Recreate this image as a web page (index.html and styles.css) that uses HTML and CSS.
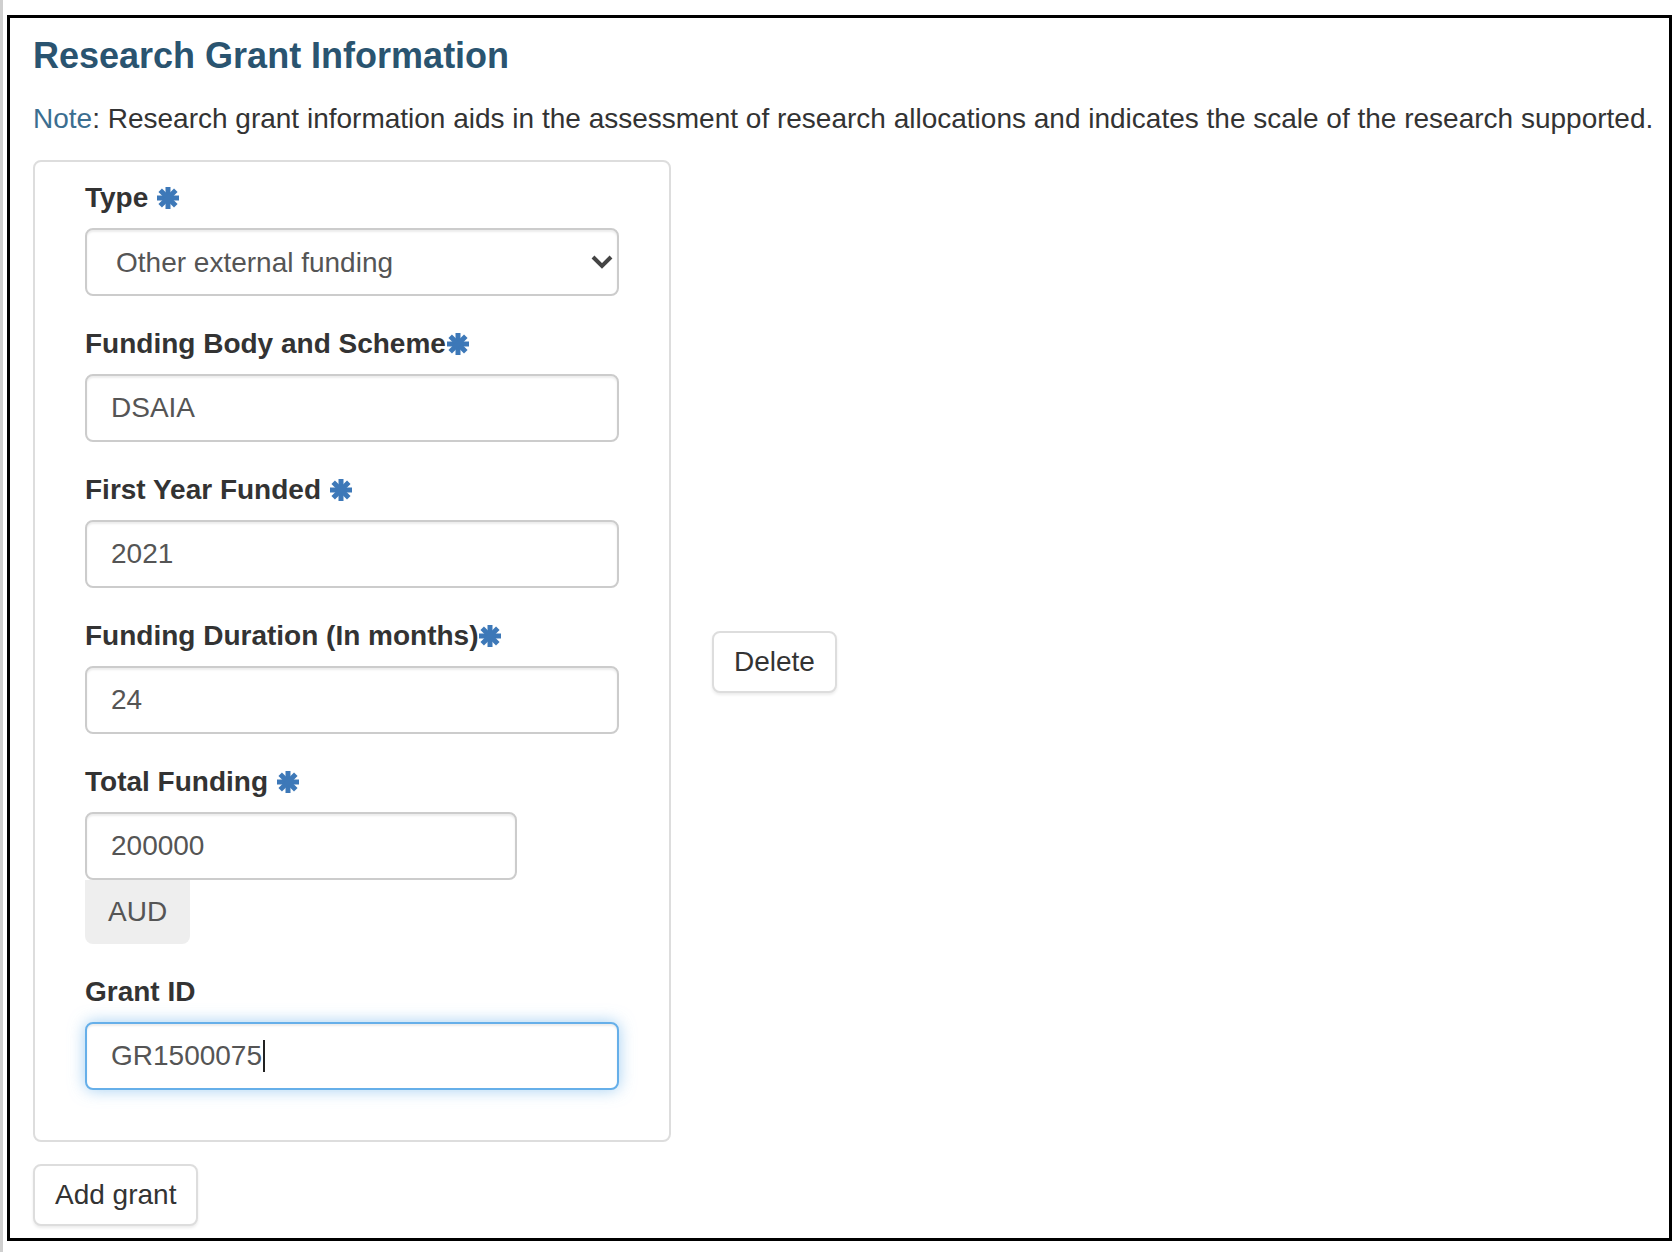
FILE: index.html
```html
<!DOCTYPE html>
<html lang="en">
<head>
<meta charset="utf-8">
<title>Research Grant Information</title>
<link rel="stylesheet" href="styles.css">
</head>
<body>
<div class="frame">
  <h4 class="title">Research Grant Information</h4>
  <p class="note"><span class="note-label">Note</span>: Research grant information aids in the assessment of research allocations and indicates the scale of the research supported.</p>

  <div class="grant-row">
    <div class="panel">
      <div class="form-group">
        <label class="label">Type <svg class="req" viewBox="0 0 24 24"><g stroke="#3d78b8" stroke-width="5"><line x1="12" y1="1" x2="12" y2="23"/><line x1="1" y1="12" x2="23" y2="12"/><line x1="4.2" y1="4.2" x2="19.8" y2="19.8"/><line x1="19.8" y1="4.2" x2="4.2" y2="19.8"/></g></svg></label>
        <div class="select-wrap">
          <select class="form-control select">
            <option>Other external funding</option>
          </select>
          <svg class="chevron" viewBox="0 0 22 14"><polyline points="2,2 11,11 20,2" fill="none" stroke="#444" stroke-width="4"/></svg>
        </div>
      </div>

      <div class="form-group">
        <label class="label">Funding Body and Scheme<svg class="req" viewBox="0 0 24 24"><g stroke="#3d78b8" stroke-width="5"><line x1="12" y1="1" x2="12" y2="23"/><line x1="1" y1="12" x2="23" y2="12"/><line x1="4.2" y1="4.2" x2="19.8" y2="19.8"/><line x1="19.8" y1="4.2" x2="4.2" y2="19.8"/></g></svg></label>
        <input class="form-control" type="text" value="DSAIA">
      </div>

      <div class="form-group">
        <label class="label">First Year Funded <svg class="req" viewBox="0 0 24 24"><g stroke="#3d78b8" stroke-width="5"><line x1="12" y1="1" x2="12" y2="23"/><line x1="1" y1="12" x2="23" y2="12"/><line x1="4.2" y1="4.2" x2="19.8" y2="19.8"/><line x1="19.8" y1="4.2" x2="4.2" y2="19.8"/></g></svg></label>
        <input class="form-control" type="text" value="2021">
      </div>

      <div class="form-group">
        <label class="label">Funding Duration (In months)<svg class="req" viewBox="0 0 24 24"><g stroke="#3d78b8" stroke-width="5"><line x1="12" y1="1" x2="12" y2="23"/><line x1="1" y1="12" x2="23" y2="12"/><line x1="4.2" y1="4.2" x2="19.8" y2="19.8"/><line x1="19.8" y1="4.2" x2="4.2" y2="19.8"/></g></svg></label>
        <input class="form-control" type="text" value="24">
      </div>

      <div class="form-group">
        <label class="label">Total Funding <svg class="req" viewBox="0 0 24 24"><g stroke="#3d78b8" stroke-width="5"><line x1="12" y1="1" x2="12" y2="23"/><line x1="1" y1="12" x2="23" y2="12"/><line x1="4.2" y1="4.2" x2="19.8" y2="19.8"/><line x1="19.8" y1="4.2" x2="4.2" y2="19.8"/></g></svg></label>
        <input class="form-control amount" type="text" value="200000">
        <div class="addon">AUD</div>
      </div>

      <div class="form-group">
        <label class="label">Grant ID</label>
        <div class="form-control focused">GR1500075<span class="caret"></span></div>
      </div>
    </div>

    <button class="btn delete" type="button">Delete</button>
  </div>

  <button class="btn add" type="button">Add grant</button>
</div>
</body>
</html>
```

FILE: styles.css
```css
* { box-sizing: border-box; }

html { background: #fff; }

body {
  margin: 0;
  min-height: 1252px;
  padding: 15px 0 0 4px;
  border-left: 3px solid #cfcfcf;
  font-family: "Liberation Sans", Arial, Helvetica, sans-serif;
  font-size: 28px;
  line-height: 40px;
  color: #333;
}

.frame {
  width: 1665px;
  height: 1226px;
  border: 3px solid #000;
  padding: 18px 0 0 23px;
}

.title {
  margin: 0 0 23px;
  font-size: 36px;
  line-height: 40px;
  font-weight: bold;
  color: #2a5470;
}

.note {
  margin: 0 0 21px;
  white-space: nowrap;
}

.note-label { color: #3b6e90; }

.grant-row {
  display: flex;
  align-items: center;
}

.panel {
  width: 638px;
  margin-bottom: 22px;
  border: 2px solid #ddd;
  border-radius: 8px;
  padding: 16px 50px 22px;
}

.form-group { margin-bottom: 28px; }

.label {
  display: block;
  margin-bottom: 10px;
  font-weight: bold;
  line-height: 40px;
  color: #333;
  white-space: nowrap;
}

.req {
  width: 24px;
  height: 24px;
  vertical-align: -3px;
}

.form-control {
  display: block;
  width: 534px;
  height: 68px;
  margin: 0;
  padding: 0 24px;
  border: 2px solid #ccc;
  border-radius: 8px;
  background: #fff;
  font-family: inherit;
  font-size: 28px;
  color: #555;
  box-shadow: inset 0 2px 2px rgba(0, 0, 0, 0.075);
  outline: none;
}

.select-wrap { position: relative; width: 534px; }

.select {
  -webkit-appearance: none;
  appearance: none;
  padding-left: 29px;
}

.chevron {
  position: absolute;
  right: 6px;
  top: 27px;
  width: 22px;
  height: 14px;
  pointer-events: none;
}

.amount {
  width: 432px;
}

.addon {
  display: flex;
  align-items: center;
  width: 105px;
  height: 64px;
  padding: 0 23px;
  background: #eee;
  border-radius: 0 0 8px 8px;
  color: #555;
}

.focused {
  display: flex;
  align-items: center;
  border-color: #66afe9;
  box-shadow: inset 0 2px 2px rgba(0, 0, 0, 0.075), 0 0 16px rgba(102, 175, 233, 0.6);
}

.caret {
  display: inline-block;
  width: 2px;
  height: 32px;
  margin-left: 1px;
  background: #222;
}

.btn {
  display: block;
  height: 62px;
  padding: 0 20px;
  border: 2px solid #ddd;
  border-radius: 8px;
  background: #fff;
  font-family: inherit;
  font-size: 28px;
  color: #333;
  box-shadow: 0 2px 3px rgba(0, 0, 0, 0.08);
  cursor: pointer;
}

.delete { margin-left: 41px; }
```
